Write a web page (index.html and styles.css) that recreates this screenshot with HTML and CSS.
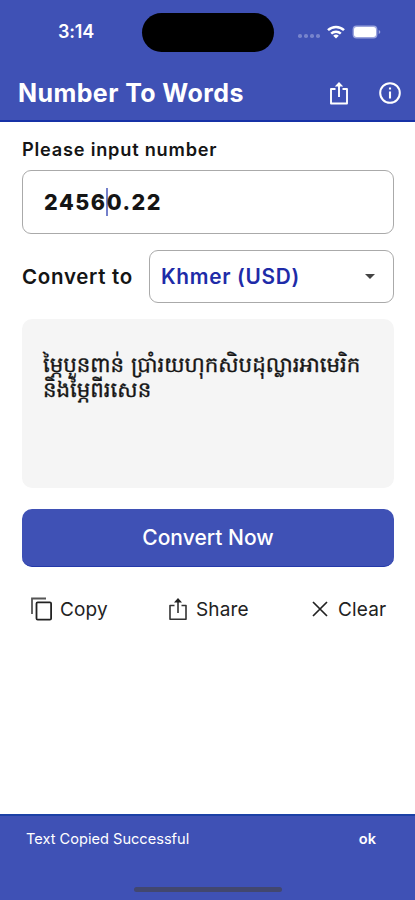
FILE: index.html
```html
<!DOCTYPE html>
<html lang="en">
<head>
<meta charset="utf-8">
<meta name="viewport" content="width=device-width, initial-scale=1">
<title>Number To Words</title>
<link rel="stylesheet" href="styles.css">
</head>
<body>
<svg class="sprite" aria-hidden="true">
  <symbol id="share" viewBox="0 0 18 24">
    <path d="M5.5 8H1v14.5h16V8h-4.5M9 16V3" fill="none" stroke="currentColor" stroke-width="1.9" stroke-linejoin="round"/>
    <path d="M4.8 5.6 9 1l4.2 4.6z" fill="currentColor"/>
  </symbol>
</svg>
<header class="top">
  <div class="status">
    <span class="time">3:14</span>
    <span class="island"></span>
    <span class="signals">
      <span class="dots"><i></i><i></i><i></i><i></i></span>
      <svg class="wifi" viewBox="0 0 18 14"><g fill="none" stroke="#fff" stroke-width="2.5"><path d="M1 5.2a11.5 11.5 0 0 1 16 0"/><path d="M4.2 8.6a7 7 0 0 1 9.6 0"/></g><path d="M6.2 10.7a4.2 4.2 0 0 1 5.6 0L9 13.6z" fill="#fff"/></svg>
      <svg class="battery" viewBox="0 0 29 14"><rect x=".6" y=".6" width="24.8" height="12.8" rx="4" fill="#9ca5dd"/><rect x="2" y="2" width="22" height="10" rx="2.7" fill="#fff"/><path d="M26.7 5v4q1.6-.7 1.6-2t-1.6-2" fill="#9ca5dd"/></svg>
    </span>
  </div>
  <div class="bar">
    <h1>Number To Words</h1>
    <svg class="bar-share"><use href="#share"/></svg>
    <svg class="info" viewBox="0 0 22 22"><circle cx="11" cy="11" r="9.8" fill="none" stroke="#fff" stroke-width="2"/><path d="M11 9.5V16.5M11 5.4v2.2" stroke="#fff" stroke-width="2.1"/></svg>
  </div>
</header>
<main>
  <label class="label">Please input number</label>
  <div class="field"><span>2456</span><i class="caret"></i><span>0.22</span></div>
  <div class="row">
    <span class="to">Convert to</span>
    <div class="select"><span>Khmer (USD)</span><svg viewBox="0 0 10 5"><path d="M0 0h10L5 5z" fill="#444"/></svg></div>
  </div>
  <div class="result" lang="km">ម្ភៃបួនពាន់ ប្រាំរយហុកសិបដុល្លារអាមេរិក<br>និងម្ភៃពីរសេន</div>
  <button class="convert">Convert Now</button>
  <div class="actions">
    <span class="action copy"><svg viewBox="0 0 22 24"><path d="M1 17V1.5h14" fill="none" stroke="#555" stroke-width="1.8"/><rect x="5.5" y="5.3" width="14.6" height="17.4" rx="1.2" fill="none" stroke="#222" stroke-width="1.8"/></svg>Copy</span>
    <span class="action share"><svg viewBox="0 0 18 24"><path d="M5.5 8.5H1v13.8h16V8.5h-4.5M9 16V3" fill="none" stroke="#333" stroke-width="1.6" stroke-linejoin="round"/><path d="M5 5.6 9 1l4 4.6z" fill="#222"/></svg>Share</span>
    <span class="action clear"><svg viewBox="0 0 16 16"><path d="m1 1 14 14M15 1 1 15" stroke="#222" stroke-width="1.7"/></svg>Clear</span>
  </div>
</main>
<footer class="snack">
  <div class="message"><span>Text Copied Successful</span><b>ok</b></div>
  <div class="home"></div>
</footer>
</body>
</html>
```
FILE: styles.css
```css
* { box-sizing: border-box; }
body { margin: 0; height: 900px; display: flex; flex-direction: column; background: #fff; color: #151515; font-family: Inter, "Liberation Sans", sans-serif; overflow: hidden; }
svg { display: block; flex: none; }
.sprite { width: 0; height: 0; position: absolute; }
.top { height: 122px; flex: none; background: #3f51b5; border-bottom: 2px solid #1731a6; color: #fff; }
.status { height: 64px; display: grid; grid-template-columns: 142px 132px 1fr; align-items: center; }
.time { padding-left: 58px; font-size: 18px; line-height: 22px; font-weight: 600; letter-spacing: -.2px; }
.island { height: 39px; border-radius: 20px; background: #000; }
.signals { display: flex; align-items: center; padding-left: 24px; }
.dots { display: flex; gap: 2.5px; width: 29px; padding-top: 8px; }
.dots i { width: 3.5px; height: 3.5px; border-radius: 50%; background: #7784cc; }
.wifi { width: 18px; height: 14px; }
.battery { width: 29px; height: 14px; margin-left: 7px; }
.bar { height: 56px; display: flex; align-items: center; padding: 1px 14px 0 18px; }
h1 { margin: 0; width: 312px; font-size: 25px; line-height: 32px; font-weight: 700; letter-spacing: .42px; white-space: nowrap; }
.bar-share { width: 18px; height: 24px; margin-right: 31px; }
.info { width: 22px; height: 22px; }
main { flex: 1; padding: 15px 21px 0 22px; display: flex; flex-direction: column; }
.label { padding-top: 1px; font-size: 18.2px; line-height: 23px; font-weight: 600; letter-spacing: .78px; }
.field { height: 64px; margin-top: 9px; padding-left: 21px; border: 1px solid #aaa; border-radius: 9px; display: flex; align-items: center; font-size: 21.5px; font-weight: 800; letter-spacing: 1.55px; }
.caret { width: 2px; height: 28px; margin: 0 -1px; background: #7480cb; }
.row { display: flex; align-items: center; margin-top: 16px; height: 53px; }
.to { width: 127px; font-size: 20.5px; font-weight: 600; letter-spacing: .7px; white-space: nowrap; }
.select { flex: 1; height: 53px; border: 1px solid #aaa; border-radius: 9px; padding: 0 18px 0 11px; display: flex; align-items: center; justify-content: space-between; color: #1e2ba8; font-size: 20.8px; font-weight: 600; letter-spacing: .7px; white-space: nowrap; }
.select svg { width: 10px; height: 5px; }
.result { height: 169px; margin-top: 16px; padding: 34px 0 0 21px; border-radius: 10px; background: #f5f5f5; color: #151515; font: 21.3px/25px "DejaVu Sans", sans-serif; text-rendering: geometricPrecision; -webkit-text-stroke: .35px #151515; white-space: nowrap; }
.convert { height: 58px; flex: none; margin: 21px 0 0; padding: 0; border: 0; border-bottom: 1px solid #2439a9; border-radius: 10px; background: #3f51b5; color: #fff; font: 500 21px/57px Inter, sans-serif; letter-spacing: .03px; }
.actions { display: grid; grid-template-columns: 137px 143px 1fr; height: 28px; margin: 28px 0 0 9px; font-size: 19px; letter-spacing: .15px; }
.action { display: flex; align-items: center; white-space: nowrap; color: #222; }
.copy svg { width: 22px; height: 24px; margin-right: 7px; }
.share svg { width: 18px; height: 24px; margin: 0 9px 0 1px; }
.clear svg { width: 16px; height: 16px; margin: 0 10px 0 1px; }
.snack { height: 86px; flex: none; background: #3f51b5; border-top: 2px solid #1c41a6; color: #fff; display: flex; flex-direction: column; align-items: center; }
.message { width: 100%; display: flex; justify-content: space-between; padding: 14px 39px 0 26px; font-size: 14.6px; line-height: 18px; }
.message b { font-weight: 600; }
.home { width: 148px; height: 5px; border-radius: 3px; margin-top: 39px; background: #42476f; }
```
